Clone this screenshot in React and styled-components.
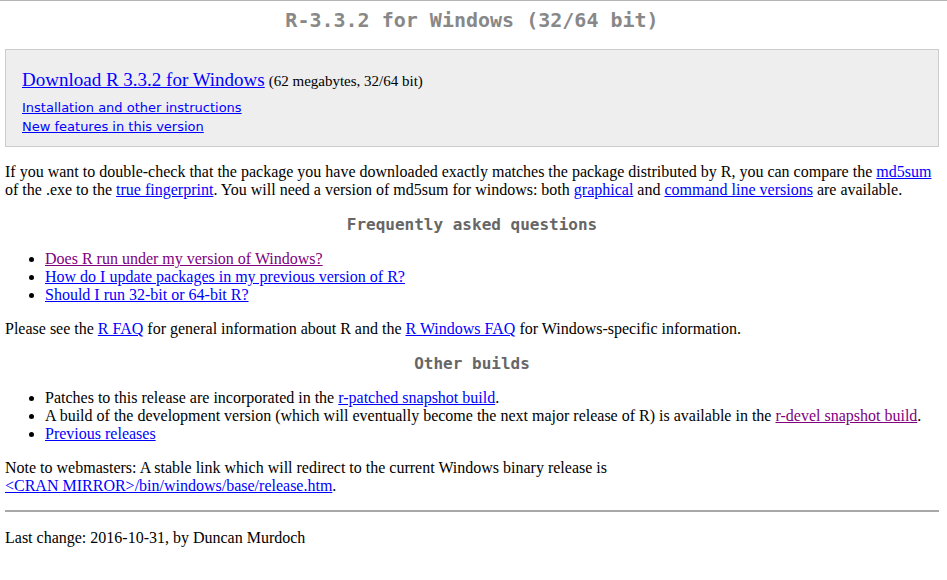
import React from "react";
import styled, { createGlobalStyle } from "styled-components";

const GlobalStyle = createGlobalStyle`
  html, body {
    margin: 0;
    padding: 0;
    background: #fff;
  }
  body {
    font-family: "Liberation Serif", "Times New Roman", serif;
    font-size: 16px;
    color: #000;
  }
`;

const Page = styled.div`
  border-top: 1px solid #b4b4b4;
  padding: 0 8px 0 5px;
`;

const Title = styled.h1`
  font-family: "DejaVu Sans Mono", monospace;
  font-size: 20px;
  font-weight: bold;
  color: #888;
  text-align: center;
  line-height: 23px;
  margin: 8px 0 17px 0;
`;

const SubTitle = styled.h2`
  font-family: "DejaVu Sans Mono", monospace;
  font-size: 16px;
  font-weight: bold;
  color: #666;
  text-align: center;
  line-height: 19px;
  margin: 16px 0 16px 0;
`;

const DownloadBox = styled.div`
  background: #eee;
  border: 1px solid #ccc;
  padding: 18px 16px 10px 16px;
`;

const BigLink = styled.a`
  font-size: 19px;
  line-height: 23px;
  color: #00f;
`;

const Size = styled.span`
  font-size: 15px;
`;

const SmallLinks = styled.div`
  display: flex;
  flex-direction: column;
  margin-top: 7px;
  font-family: "DejaVu Sans", Verdana, sans-serif;
  font-size: 13px;
  line-height: 19px;

  a {
    color: #00f;
  }
`;

const Para = styled.p`
  margin: ${(p) => p.$top || 0}px 0 0 0;
  line-height: 18px;
`;

const Link = styled.a`
  color: ${(p) => (p.$visited ? "#800080" : "#00f")};
`;

const List = styled.ul`
  margin: 0 0 16px 0;
  padding-left: 40px;
  line-height: 18px;
`;

const Rule = styled.hr`
  border: none;
  border-top: 2px solid #a8a8a8;
  margin: 15px 0 17px 0;
`;

export default function App() {
  return (
    <Page>
      <GlobalStyle />
      <Title>R-3.3.2 for Windows (32/64 bit)</Title>

      <DownloadBox>
        <div>
          <BigLink href="#">Download R 3.3.2 for Windows</BigLink>{" "}
          <Size>(62 megabytes, 32/64 bit)</Size>
        </div>
        <SmallLinks>
          <div>
            <a href="#">Installation and other instructions</a>
          </div>
          <div>
            <a href="#">New features in this version</a>
          </div>
        </SmallLinks>
      </DownloadBox>

      <Para $top={16}>
        If you want to double-check that the package you have downloaded exactly
        matches the package distributed by R, you can compare the{" "}
        <Link href="#">md5sum</Link> of the .exe to the{" "}
        <Link href="#">true fingerprint</Link>. You will need a version of md5sum
        for windows: both <Link href="#">graphical</Link> and{" "}
        <Link href="#">command line versions</Link> are available.
      </Para>

      <SubTitle>Frequently asked questions</SubTitle>
      <List>
        <li>
          <Link href="#" $visited>
            Does R run under my version of Windows?
          </Link>
        </li>
        <li>
          <Link href="#">How do I update packages in my previous version of R?</Link>
        </li>
        <li>
          <Link href="#">Should I run 32-bit or 64-bit R?</Link>
        </li>
      </List>

      <Para>
        Please see the <Link href="#">R FAQ</Link> for general information about R
        and the <Link href="#">R Windows FAQ</Link> for Windows-specific
        information.
      </Para>

      <SubTitle>Other builds</SubTitle>
      <List>
        <li>
          Patches to this release are incorporated in the{" "}
          <Link href="#">r-patched snapshot build</Link>.
        </li>
        <li>
          A build of the development version (which will eventually become the
          next major release of R) is available in the{" "}
          <Link href="#" $visited>
            r-devel snapshot build
          </Link>
          .
        </li>
        <li>
          <Link href="#">Previous releases</Link>
        </li>
      </List>

      <Para>
        Note to webmasters: A stable link which will redirect to the current
        Windows binary release is
        <br />
        <Link href="#">&lt;CRAN MIRROR&gt;/bin/windows/base/release.htm</Link>.
      </Para>

      <Rule />

      <Para>Last change: 2016-10-31, by Duncan Murdoch</Para>
    </Page>
  );
}
